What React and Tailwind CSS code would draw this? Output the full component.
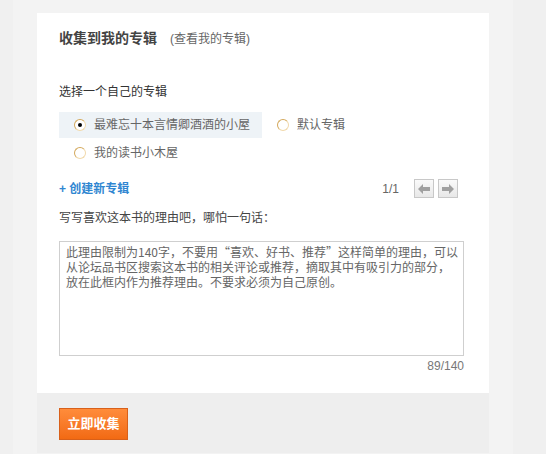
import React, { useState } from 'react';

const font = { fontFamily: '"Liberation Sans", "Noto Sans CJK SC", sans-serif' };
const cjk = { fontFamily: '"Noto Sans CJK SC", "Liberation Sans", sans-serif' };

const Radio = ({ checked }) => (
  <span className="w-[12px] h-[12px] rounded-full border border-[#d3a85c] border-r-[#f1d9ab] border-b-[#f1d9ab] bg-white flex items-center justify-center shrink-0">
    {checked && <span className="w-[4px] h-[4px] rounded-full bg-black" />}
  </span>
);

const Option = ({ label, checked, onClick, active }) => (
  <div
    onClick={onClick}
    className={`flex items-center h-[26px] pl-[15px] pr-[12px] gap-[8px] cursor-pointer ${active ? 'bg-[#eef3f7]' : ''}`}
  >
    <Radio checked={checked} />
    <span className="text-[12px] text-[#666]">{label}</span>
  </div>
);

const ArrowBtn = ({ dir }) => (
  <button className="w-[20px] h-[19px] border border-[#c8c8c8] bg-gradient-to-b from-[#fafafa] to-[#e8e8e8] flex items-center justify-center">
    <svg width="12" height="10" viewBox="0 0 12 10">
      {dir === 'left' ? (
        <path d="M0 5 L5 0 L5 3 L12 3 L12 7 L5 7 L5 10 Z" fill="#a0a0a0" />
      ) : (
        <path d="M12 5 L7 0 L7 3 L0 3 L0 7 L7 7 L7 10 Z" fill="#a0a0a0" />
      )}
    </svg>
  </button>
);

export default function App() {
  const [sel, setSel] = useState(0);
  const albums = ['最难忘十本言情卿酒酒的小屋', '默认专辑', '我的读书小木屋'];
  const text =
    '此理由限制为140字，不要用“喜欢、好书、推荐”这样简单的理由，可以从论坛品书区搜索这本书的相关评论或推荐，摘取其中有吸引力的部分，放在此框内作为推荐理由。不要求必须为自己原创。';

  return (
    <div className="w-[546px] h-[454px] bg-[#f0f0f0] overflow-hidden" style={font}>
      <div className="ml-[13px] w-[500px] h-full bg-[#f3f3f3] pl-[24px] pt-[13px]">
        <div className="w-[452px] bg-white px-[22px] pt-[15px] pb-[18px]">
          <div className="flex items-baseline gap-[13px]">
            <h2 className="text-[14px] font-bold text-[#444]">收集到我的专辑</h2>
            <a className="text-[12px] text-[#666]">(查看我的专辑)</a>
          </div>

          <p className="mt-[34px] text-[12px] text-[#333]">选择一个自己的专辑</p>

          <div className="mt-[11px] flex flex-wrap w-[420px] gap-y-[2px]">
            {albums.map((a, i) => (
              <Option key={i} label={a} checked={sel === i} active={sel === i} onClick={() => setSel(i)} />
            ))}
          </div>

          <div className="mt-[13px] flex items-center justify-between w-[399px]">
            <a className="text-[12px] font-bold text-[#2f86d1]">+ 创建新专辑</a>
            <div className="flex items-center">
              <span className="text-[12px] text-[#666] mr-[15px]">1/1</span>
              <div className="flex gap-[4px]">
                <ArrowBtn dir="left" />
                <ArrowBtn dir="right" />
              </div>
            </div>
          </div>

          <p className="mt-[11px] text-[12px] text-[#444]">写写喜欢这本书的理由吧，哪怕一句话：</p>

          <textarea
            style={cjk}
            className="mt-[14px] block w-[405px] h-[115px] border border-[#cfcfcf] pl-[6px] pr-[3px] py-[2px] text-[12px] leading-[15px] text-[#666] resize-none outline-none"
            defaultValue={text}
          />
          <div className="w-[405px] text-right text-[12px] text-[#777] mt-[1px]">89/140</div>
        </div>
        <div className="w-[452px] h-[60px] bg-[#eeeeee] px-[22px] pt-[15px]">
          <button className="w-[69px] h-[32px] border border-[#d8601a] bg-gradient-to-b from-[#ff8c3a] to-[#f26a12] text-white text-[13px] font-bold">
            立即收集
          </button>
        </div>
      </div>
    </div>
  );
}
